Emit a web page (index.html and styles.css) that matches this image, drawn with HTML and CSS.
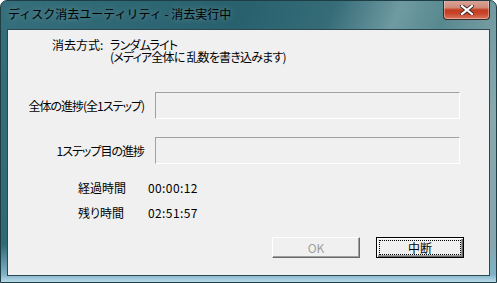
FILE: index.html
```html
<!DOCTYPE html>
<html lang="ja">
<head>
    <meta charset="UTF-8">
    <title>ディスク消去ユーティリティ - 消去実行中</title>
    <link rel="stylesheet" href="styles.css">
</head>
<body>
    <div class="window">
        <div class="titlebar">
            <span class="title">ディスク消去ユーティリティ - 消去実行中</span>
            <button class="close" title="閉じる">
                <svg width="14" height="10" viewBox="0 0 14 10">
                    <path d="M2 1 L12 9 M12 1 L2 9" stroke="#3a2a2a" stroke-width="4" stroke-linecap="square"/>
                    <path d="M2 1 L12 9 M12 1 L2 9" stroke="#fff" stroke-width="2.2" stroke-linecap="square"/>
                </svg>
            </button>
        </div>
        <div class="frame-body">
            <div class="client">
                <div class="method">
                    <span class="method-label">消去方式:</span>
                    <div class="method-value">
                        <div>ランダムライト</div>
                        <div>(メディア全体に 乱数を書き込みます)</div>
                    </div>
                </div>

                <div class="progress-row first">
                    <span class="progress-label">全体の進捗(全1ステップ)</span>
                    <div class="progress-box"></div>
                </div>
                <div class="progress-row">
                    <span class="progress-label">1ステップ目の進捗</span>
                    <div class="progress-box"></div>
                </div>

                <div class="times">
                    <span class="time-label">経過時間</span>
                    <span class="time-value">00:00:12</span>
                    <span class="time-label">残り時間</span>
                    <span class="time-value">02:51:57</span>
                </div>

                <div class="buttons">
                    <button class="btn" disabled>OK</button>
                    <button class="btn default">中断</button>
                </div>
            </div>
        </div>
    </div>
</body>
</html>
```

FILE: styles.css
```css
body {
    margin: 0;
    background: #ffffff;
    font-family: "Noto Sans CJK JP", "Noto Sans", sans-serif;
    font-size: 12px;
    color: #000;
}
.window {
    width: 497px;
    height: 283px;
    box-sizing: border-box;
    display: flex;
    flex-direction: column;
    border: 1px solid #1f3d45;
    border-radius: 7px 7px 0 0;
    background: linear-gradient(112deg, #366f7c 0%, #28606d 40%, #356c78 55%, #6f9aa1 66%, #58888f 74%, #87a9ae 88%, #86a7ad 100%);
    overflow: hidden;
}
.titlebar {
    height: 28px;
    display: flex;
    justify-content: space-between;
    align-items: flex-start;
    padding-left: 7px;
}
.title {
    margin-top: 6px;
    line-height: 14px;
    color: #000;
    text-shadow: 0 0 6px rgba(255, 255, 255, 0.35);
}
.close {
    width: 47px;
    height: 20px;
    margin: -1px 6px 0 0;
    padding: 0;
    border: 1px solid #3b2c2c;
    border-top: none;
    border-radius: 0 0 4px 4px;
    background: linear-gradient(#dba79c 0%, #cf8b7a 40%, #c33d20 52%, #c8432a 70%, #d9775d 100%);
    display: flex;
    align-items: center;
    justify-content: center;
    box-shadow: inset 0 0 0 1px rgba(255, 255, 255, 0.35);
}
.frame-body {
    flex: 1;
    display: flex;
    padding: 0 6px 6px 6px;
    background: linear-gradient(transparent 85%, #7fb2c8 97%, #b9dbe8 100%);
}
.client {
    flex: 1;
    border: 1px solid #2c4850;
    background: #f0f0f0;
    display: flex;
    flex-direction: column;
    font-feature-settings: "palt";
}
.method {
    display: flex;
    margin: 9px 0 0 44px;
    line-height: 12px;
}
.method-label {
    width: 58px;
}
.method-value {
    display: flex;
    flex-direction: column;
    letter-spacing: -0.8px;
}
.progress-row {
    display: flex;
    align-items: center;
    gap: 11px;
    margin-top: 18px;
}
.progress-row.first {
    margin-top: 29px;
}
.progress-label {
    width: 136px;
    text-align: right;
    letter-spacing: -1px;
}
.progress-box {
    width: 303px;
    height: 25px;
    border: 1px solid;
    border-color: #a0a0a0 #ffffff #ffffff #a0a0a0;
}
.times {
    display: grid;
    grid-template-columns: 70px auto;
    row-gap: 13px;
    margin: 18px 0 0 70px;
    line-height: 12px;
}
.time-value {
    letter-spacing: 0.4px;
}
.buttons {
    display: flex;
    justify-content: flex-end;
    gap: 16px;
    margin-top: 18px;
    padding-right: 25px;
}
.btn {
    width: 88px;
    height: 21px;
    padding: 0;
    font-family: inherit;
    font-size: 12px;
    background: #f0f0f0;
    color: #000;
    border: 1px solid;
    border-color: #ffffff #696969 #696969 #ffffff;
    box-shadow: inset -1px -1px #a0a0a0;
}
.btn:disabled {
    color: #a0a0a0;
}
.btn.default {
    border-color: #000;
    box-shadow: inset 1px 1px #ffffff, inset -1px -1px #696969, inset -2px -2px #a0a0a0;
    outline: 1px dotted #000;
    outline-offset: -4px;
}
```
